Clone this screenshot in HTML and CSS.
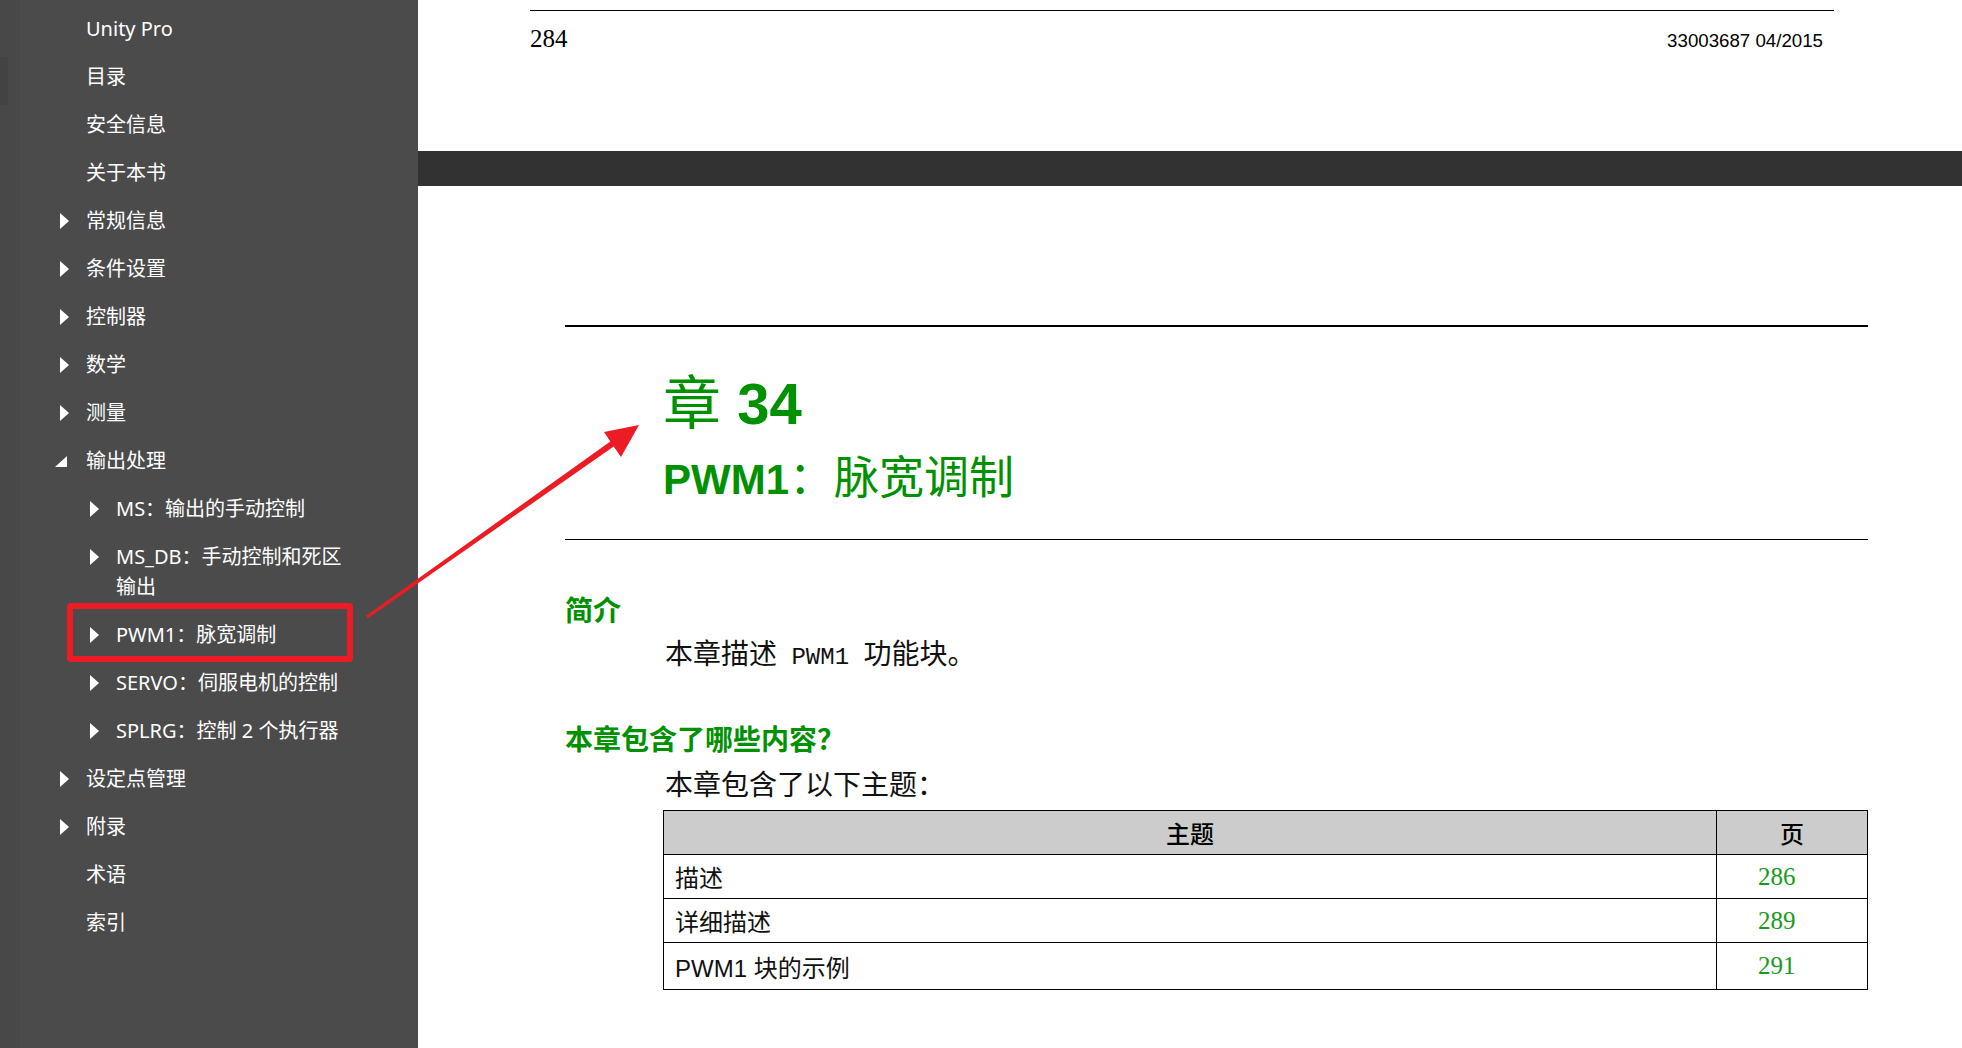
FILE: index.html
```html
<!DOCTYPE html>
<html lang="zh-CN">
<head>
  <meta charset="UTF-8">
  <title>PWM1：脉宽调制 - Unity Pro</title>
  <link rel="stylesheet" href="styles.css">
</head>
<body>

  <div class="app">

    <nav class="sidebar">
      <div class="rail"><div class="thumb"></div></div>

      <ul class="toc">
        <li class="item lvl1"><span class="tri"></span><span class="label">Unity Pro</span></li>
        <li class="item lvl1"><span class="tri"></span><span class="label">目录</span></li>
        <li class="item lvl1"><span class="tri"></span><span class="label">安全信息</span></li>
        <li class="item lvl1"><span class="tri"></span><span class="label">关于本书</span></li>
        <li class="item lvl1"><span class="tri closed"></span><span class="label">常规信息</span></li>
        <li class="item lvl1"><span class="tri closed"></span><span class="label">条件设置</span></li>
        <li class="item lvl1"><span class="tri closed"></span><span class="label">控制器</span></li>
        <li class="item lvl1"><span class="tri closed"></span><span class="label">数学</span></li>
        <li class="item lvl1"><span class="tri closed"></span><span class="label">测量</span></li>
        <li class="item lvl1"><span class="tri open"></span><span class="label">输出处理</span></li>
        <li class="item lvl2"><span class="tri closed"></span><span class="label">MS：输出的手动控制</span></li>
        <li class="item lvl2"><span class="tri closed"></span><span class="label">MS_DB：手动控制和死区输出</span></li>
        <li class="item lvl2 current">
          <span class="tri closed"></span><span class="label">PWM1：脉宽调制</span>
          <!-- red annotation box -->
          <span class="mark"></span>
        </li>
        <li class="item lvl2"><span class="tri closed"></span><span class="label">SERVO：伺服电机的控制</span></li>
        <li class="item lvl2"><span class="tri closed"></span><span class="label">SPLRG：控制 2 个执行器</span></li>
        <li class="item lvl1"><span class="tri closed"></span><span class="label">设定点管理</span></li>
        <li class="item lvl1"><span class="tri closed"></span><span class="label">附录</span></li>
        <li class="item lvl1"><span class="tri"></span><span class="label">术语</span></li>
        <li class="item lvl1"><span class="tri"></span><span class="label">索引</span></li>
      </ul>
    </nav>

    <main class="page">
      <div class="page-head">
        <span class="page-no">284</span>
        <span class="doc-ref">33003687 04/2015</span>
      </div>

      <div class="band"></div>

      <div class="chapter">
        <div class="chapter-title">
          <div class="chapter-num"><span class="cjk">章</span> 34</div>
          <div class="chapter-name">PWM1<span class="cjk">：脉宽调制</span></div>
        </div>

        <h2 class="section-title first">简介</h2>
        <p class="para">本章描述<span class="mono"> PWM1 </span>功能块。</p>

        <h2 class="section-title">本章包含了哪些内容？</h2>
        <p class="para tight">本章包含了以下主题：</p>

        <table class="topics">
          <tr>
            <th>主题</th>
            <th class="page-col">页</th>
          </tr>
          <tr>
            <td>描述</td>
            <td class="num">286</td>
          </tr>
          <tr>
            <td>详细描述</td>
            <td class="num">289</td>
          </tr>
          <tr class="last">
            <td>PWM1 块的示例</td>
            <td class="num">291</td>
          </tr>
        </table>
      </div>
    </main>

  </div>

  <!-- red annotation arrow -->
  <svg class="arrow" width="1962" height="1048" viewBox="0 0 1962 1048">
    <polygon fill="#ed1c24" points="366.1,615.8 610.3,441.5 604,432 639,425 621,457 613.7,446.5 367.9,618.2"/>
  </svg>

</body>
</html>
```

FILE: styles.css
```css
html, body {
  margin: 0;
  padding: 0;
  height: 100%;
  overflow: hidden;
  background-color: #fff;
}

body {
  position: relative;
}

.app {
  display: flex;
  height: 1048px;
}

/* sidebar */

.sidebar {
  width: 418px;
  flex: none;
  display: flex;
  background-color: #4b4b4b;
  color: #fff;
  font-family: 'Noto Sans', 'Noto Sans CJK SC', sans-serif;
  font-size: 20px;
}

.rail {
  width: 20px;
  flex: none;
  background-color: #484848;
}

.thumb {
  width: 8px;
  height: 48px;
  margin-top: 57px;
  background-color: #434343;
  border-radius: 0 3px 3px 0;
}

.toc {
  list-style: none;
  margin: 0;
  padding: 5px 63px 0 0;
  flex: 1;
}

.item {
  display: flex;
  align-items: flex-start;
  padding: 9px 0;
  line-height: 30px;
  position: relative;
}

.item.lvl1 {
  padding-left: 40px;
}

.item.lvl2 {
  padding-left: 70px;
}

.tri {
  width: 26px;
  height: 30px;
  flex: none;
  position: relative;
}

.tri.closed::before {
  content: "";
  position: absolute;
  left: 0;
  top: 7px;
  border-left: 9px solid #fff;
  border-top: 8px solid transparent;
  border-bottom: 8px solid transparent;
}

.tri.open::before {
  content: "";
  position: absolute;
  left: -5px;
  top: 10px;
  border-bottom: 11px solid #fff;
  border-left: 12px solid transparent;
}

.label {
  flex: 1;
}

.mark {
  position: absolute;
  left: 47px;
  top: -8px;
  width: 286px;
  height: 59px;
  box-sizing: border-box;
  border: 6px solid #ed1c24;
  border-radius: 4px;
}

/* page */

.page {
  flex: 1;
  background-color: #fff;
  color: #000;
}

.page-head {
  margin: 10px 128px 0 112px;
  height: 141px;
  box-sizing: border-box;
  border-top: 1px solid #000;
  padding: 13px 11px 0 0;
  display: flex;
  justify-content: space-between;
  align-items: baseline;
}

.page-no {
  font-family: 'Liberation Serif', serif;
  font-size: 25px;
  line-height: 30px;
}

.doc-ref {
  font-family: 'Liberation Sans', sans-serif;
  font-size: 18.7px;
  line-height: 30px;
}

.band {
  height: 35px;
  background-color: #323232;
}

.chapter {
  margin: 139px 94px 0 147px;
  font-family: 'Liberation Sans', 'Noto Sans CJK SC', sans-serif;
}

.chapter-title {
  border-top: 2px solid #000;
  border-bottom: 1px solid #000;
  padding: 39px 0 26px 98px;
  color: #009100;
  font-weight: bold;
}

.chapter-num {
  font-size: 58px;
  line-height: 66px;
}

.chapter-name {
  font-size: 42px;
  line-height: 66px;
  margin-top: 5px;
}

.cjk {
  font-family: 'Noto Sans CJK SC', sans-serif;
  font-weight: normal;
}

.chapter-name .cjk {
  font-size: 45px;
}

.section-title {
  margin: 44px 0 0 0;
  font-family: 'Noto Sans CJK SC', sans-serif;
  font-size: 28px;
  line-height: 36px;
  font-weight: bold;
  color: #009100;
}

.section-title.first {
  margin-top: 51px;
}

.para {
  margin: 7px 0 0 100px;
  font-family: 'Noto Sans CJK SC', sans-serif;
  font-size: 28px;
  line-height: 36px;
  color: #111;
}

.para.tight {
  margin-top: 9px;
}

.mono {
  font-family: 'Liberation Mono', monospace;
  font-size: 24px;
  white-space: pre;
}

.topics {
  margin: 9px 0 0 98px;
  width: calc(100% - 98px);
  border-collapse: collapse;
  font-size: 24px;
}

.topics th,
.topics td {
  border: 1px solid #000;
  height: 43px;
  padding: 0;
}

.topics th {
  background-color: #cccccc;
  font-family: 'Noto Sans CJK SC', sans-serif;
  font-weight: 500;
  text-align: center;
}

.topics td {
  padding-left: 11px;
  font-family: 'Liberation Sans', 'Noto Sans CJK SC', sans-serif;
  color: #111;
}

.topics .page-col {
  width: 150px;
}

.topics td.num {
  padding-left: 41px;
  font-family: 'Liberation Serif', serif;
  font-size: 25px;
  color: #1a9a1a;
}

.topics tr.last td {
  height: 46px;
}

/* annotation arrow */

.arrow {
  position: absolute;
  top: 0;
  left: 0;
  pointer-events: none;
}
```
